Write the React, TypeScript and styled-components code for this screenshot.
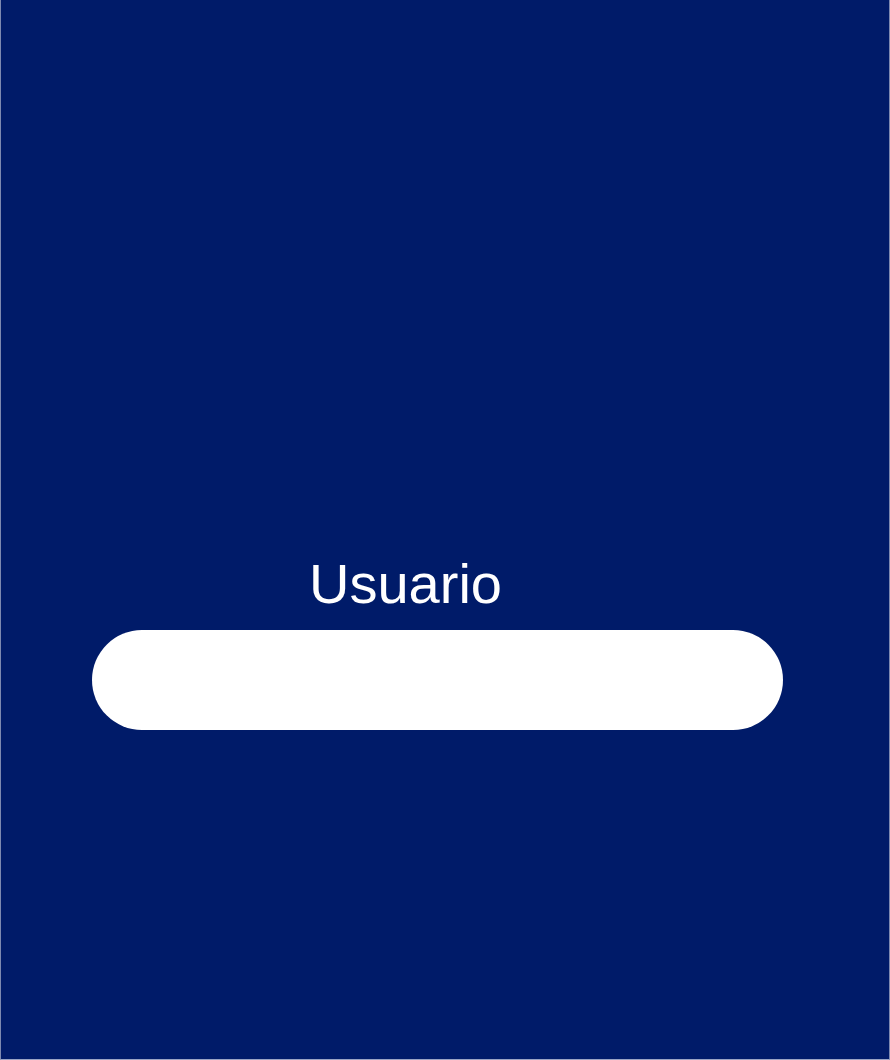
import React from "react";
import styled, { createGlobalStyle } from "styled-components";

const Global = createGlobalStyle`
  html, body { margin: 0; padding: 0; background: #001b69; }
  * { box-sizing: border-box; }
`;

const Screen = styled.main`
  width: 890px;
  height: 1060px;
  background: #001b69;
  border-left: 1px solid #7d89b0;
  border-right: 1px solid #7d89b0;
  border-bottom: 1px solid #9aa4c4;
  display: flex;
  flex-direction: column;
  padding: 556px 0 0 91px;
  font-family: "Liberation Sans", Arial, sans-serif;
`;

const Label = styled.label`
  display: block;
  color: #ffffff;
  font-size: 56px;
  line-height: 55px;
  margin-left: 217px;
`;

const Input = styled.input`
  margin-top: 19px;
  width: 691px;
  height: 100px;
  border: none;
  outline: none;
  border-radius: 50px;
  background: #ffffff;
  padding: 0 40px;
  font-family: inherit;
  font-size: 28px;
  color: #001b69;
`;

export default function App() {
  return (
    <>
      <Global />
      <Screen>
        <Label htmlFor="usuario">Usuario</Label>
        <Input id="usuario" type="text" />
      </Screen>
    </>
  );
}
